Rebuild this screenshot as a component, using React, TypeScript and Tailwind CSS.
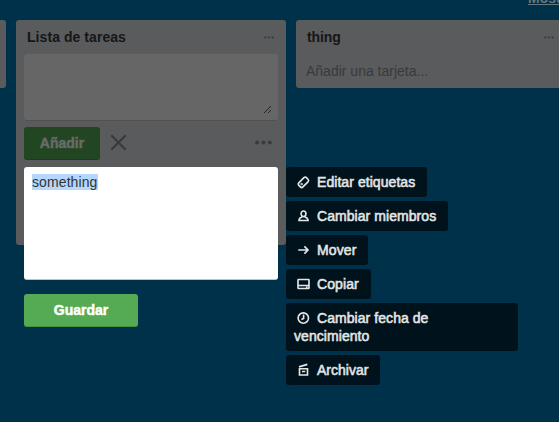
import type { ReactNode } from "react";

function Dots({ large = false }: { large?: boolean }) {
  return large ? (
    <svg className="h-[5px] w-[17px] text-[#3b3b3b]" viewBox="0 0 17 5" fill="currentColor">
      <circle cx="2.1" cy="2.5" r="2" />
      <circle cx="8.5" cy="2.5" r="2" />
      <circle cx="14.8" cy="2.5" r="2" />
    </svg>
  ) : (
    <svg className="h-[3px] w-[10px] text-[#3e3f40]" viewBox="0 0 10 3" fill="currentColor">
      <circle cx="1.4" cy="1.5" r="1.15" />
      <circle cx="5" cy="1.5" r="1.15" />
      <circle cx="8.6" cy="1.5" r="1.15" />
    </svg>
  );
}

function ListHeader({ title, spacing }: { title: string; spacing: string }) {
  return (
    <div className="flex h-[34px] items-center justify-between pr-3 pl-[11px]">
      <h2 className={`text-[14px] leading-[18px] font-bold text-[#161616] ${spacing}`}>{title}</h2>
      <Dots />
    </div>
  );
}

const icons: Record<string, ReactNode> = {
  label: (
    <g transform="rotate(-45 9.4 9.3)">
      <rect x="4" y="6.4" width="10.8" height="5.8" rx="1.8" />
      <circle cx="6.9" cy="9.3" r="0.4" />
    </g>
  ),
  member: (
    <>
      <ellipse cx="9.5" cy="6.8" rx="2.4" ry="2.8" />
      <path d="M8 9.2 L7.6 10.3 Q5.2 10.8 5 13.5 H14 Q13.8 10.8 11.4 10.3 L11 9.2" />
    </>
  ),
  move: <path d="M4.3 9 H14 M10.4 5.4 L14 9 L10.4 12.6" />,
  card: (
    <>
      <rect x="4" y="4.5" width="11" height="9" rx="0.6" />
      <path d="M4 10.5 H15 M12 12.2 H13.6" />
    </>
  ),
  clock: (
    <>
      <circle cx="9.3" cy="9" r="5.2" />
      <path d="M9.6 5.4 V9.4 L7.4 10.5" />
    </>
  ),
  archive: <path d="M5.5 7.7 H13.5 V14 H5.5 Z M5 5.9 L13.3 3.4 M8 10.5 H11.2" />,
};

const actions = [
  { label: "Editar etiquetas", icon: "label", size: "h-[30px] w-[141px]", spacing: "tracking-[0.06px]" },
  { label: "Cambiar miembros", icon: "member", size: "h-[30px] w-[162px]", spacing: "tracking-[0.06px]" },
  { label: "Mover", icon: "move", size: "h-[30px] w-[82px]", spacing: "tracking-[0.1px]" },
  { label: "Copiar", icon: "card", size: "h-[30px] w-[85px]", spacing: "tracking-[0.1px]" },
  { label: "Cambiar fecha de vencimiento", icon: "clock", size: "h-[48px] w-[232px]", spacing: "tracking-[0.06px]" },
  { label: "Archivar", icon: "archive", size: "h-[30px] w-[94px]", spacing: "tracking-[0px]" },
];

function QuickEditor() {
  return (
    <div className="absolute top-[167px] left-6 flex items-start gap-2">
      <div className="flex w-[254px] flex-col items-start">
        <div className="h-[113px] w-full rounded-[3px] border-b border-[#b9c3c8] bg-white px-2 pt-[7px] text-[14px] leading-4 text-[#333]">
          <span className="inline-block h-4 w-[66px] bg-[#b3d7fd] tracking-[0.1px]">something</span>
        </div>
        <button className="mt-[14px] h-[33px] w-[114px] rounded-[3px] border-b border-[#459145] bg-[#54ab54] text-[14px] leading-8 font-bold text-white [-webkit-text-stroke:0.5px_white]">
          Guardar
        </button>
      </div>
      <div className="flex flex-col items-start gap-1">
        {actions.map((action) => (
          <button
            key={action.label}
            className={`rounded-[3px] bg-[#00131c] py-1.5 pr-2 pl-2 text-left text-[14px] leading-[18px] text-[#e3e6e7] [-webkit-text-stroke:0.55px_#e3e6e7] ${action.size} ${action.spacing}`}
          >
            <svg
              className="mr-[5px] inline-block h-[18px] w-[18px] align-top"
              viewBox="0 0 18 18"
              fill="none"
              stroke="currentColor"
              strokeWidth="1.65"
            >
              {icons[action.icon]}
            </svg>
            {action.icon === "clock" ? <>Cambiar fecha de<br />vencimiento</> : action.label}
          </button>
        ))}
      </div>
    </div>
  );
}

export default function App() {
  return (
    <main className="relative h-[422px] w-[559px] overflow-hidden bg-[#00314a] font-['Liberation_Sans',Arial,sans-serif]">
      <div className="flex h-5 justify-end overflow-hidden">
        <a className="-mt-[10px] -mr-8 h-4 w-[63px] text-[14px] leading-4 font-bold whitespace-nowrap text-[#66777f] underline decoration-1 underline-offset-1">
          Mostrar
        </a>
      </div>
      <div className="flex items-start gap-[10px]">
        <section className="h-[68px] w-1.5 shrink-0 rounded-r-[3px] bg-[#5a5b5d]" />
        <section className="h-[225px] w-[270px] shrink-0 rounded-[3px] bg-[#5a5b5d]">
          <ListHeader title="Lista de tareas" spacing="tracking-[0.06px]" />
          <div className="mx-2 flex h-[67px] items-end justify-end rounded-[3px] border-b border-[#505152] bg-[#666] pr-[7px] pb-[6px]">
            <svg className="h-2 w-2" viewBox="0 0 8 8" stroke="#252525" strokeWidth="1" shapeRendering="crispEdges">
              <path d="M0.5 7.5 L7.5 0.5 M4.5 7.5 L7.5 4.5" />
            </svg>
          </div>
          <div className="mt-1.5 flex h-[33px] items-center px-2">
            <button className="h-[33px] w-[76px] rounded-[3px] border-b border-[#1b3d1b] bg-[#224622] text-[14px] leading-8 font-bold text-[#686b68] [-webkit-text-stroke:0.5px_#686b68]">
              Añadir
            </button>
            <svg className="-mt-[2px] ml-[10px] h-[17px] w-[17px]" viewBox="0 0 17 17" fill="none" stroke="#3b3b3c" strokeWidth="2.3">
              <path d="M1.3 1.3 L15.7 15.7 M15.7 1.3 L1.3 15.7" />
            </svg>
            <div className="mr-[6px] -mt-[2px] ml-auto flex">
              <Dots large />
            </div>
          </div>
        </section>
        <section className="h-[68px] w-[270px] shrink-0 rounded-[3px] bg-[#5a5b5d]">
          <ListHeader title="thing" spacing="tracking-[-0.1px]" />
          <p className="px-[10px] pt-2 text-[14px] leading-[18px] text-[#383a3b]">Añadir una tarjeta...</p>
        </section>
      </div>
      <QuickEditor />
    </main>
  );
}
